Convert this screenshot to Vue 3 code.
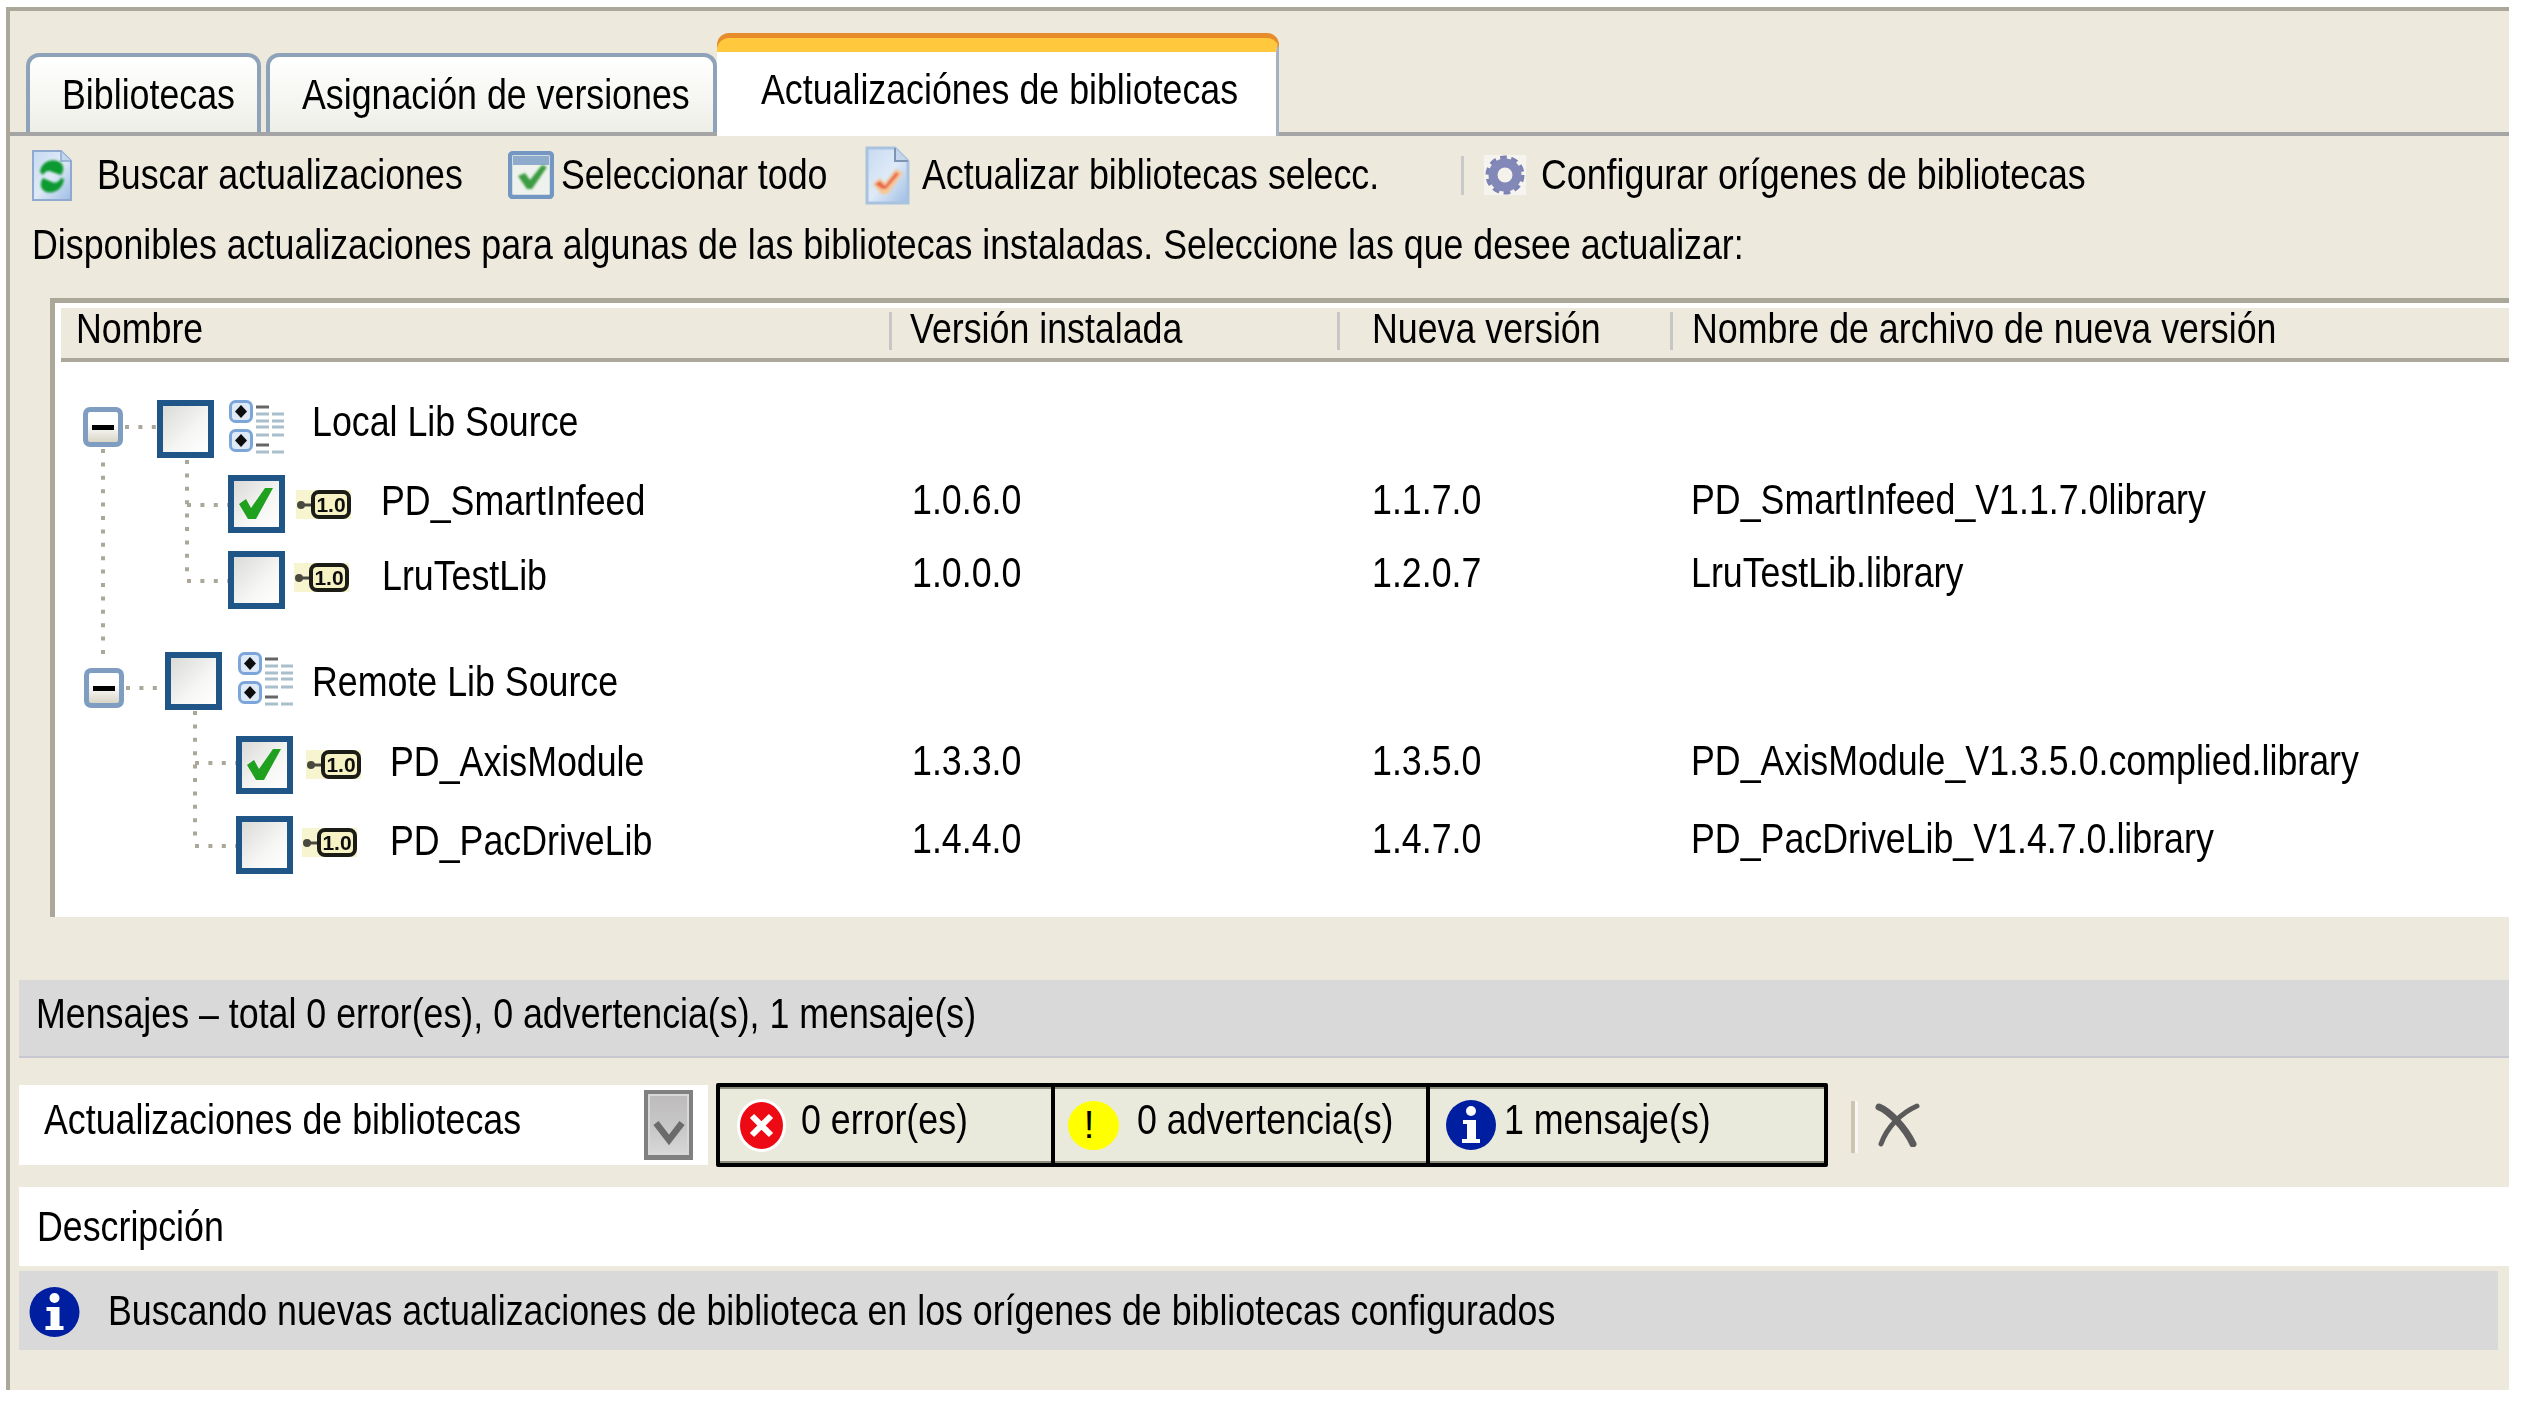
<script setup>
const rows = [
  { name: 'Local Lib Source', group: true, top: 0, exLeft: 28, exTop: 7, cbLeft: 34, checked: false, iconGap: 15, iconTop: 0, textGap: 27, textTop: 0 },
  { name: 'PD_SmartInfeed', top: 17, cbLeft: 173, checked: true, iconGap: 11, iconTop: 15, textGap: 30, textTop: 4, v1: '1.0.6.0', v2: '1.1.7.0', file: 'PD_SmartInfeed_V1.1.7.0library', vTop: 3 },
  { name: 'LruTestLib', top: 18, cbLeft: 173, checked: false, iconGap: 9, iconTop: 12, textGap: 33, textTop: 3, v1: '1.0.0.0', v2: '1.2.0.7', file: 'LruTestLib.library', vTop: 0 },
  { name: 'Remote Lib Source', group: true, top: 43, exLeft: 29, exTop: 16, cbLeft: 41, checked: false, iconGap: 16, iconTop: 0, textGap: 18, textTop: 8 },
  { name: 'PD_AxisModule', top: 26, cbLeft: 181, checked: true, iconGap: 13, iconTop: 14, textGap: 29, textTop: 4, v1: '1.3.3.0', v2: '1.3.5.0', file: 'PD_AxisModule_V1.3.5.0.complied.library', vTop: 3 },
  { name: 'PD_PacDriveLib', top: 22, cbLeft: 181, checked: false, iconGap: 9, iconTop: 12, textGap: 33, textTop: 3, v1: '1.4.4.0', v2: '1.4.7.0', file: 'PD_PacDriveLib_V1.4.7.0.library', vTop: 1 }
]
const connectors = [
  'M48 87V293', 'M70 65H102', 'M132 98V216', 'M132 143H173', 'M132 219H173',
  'M71 326H110', 'M140 349V483', 'M140 401H181', 'M140 484H181'
]
const pos = (px) => `${px}px`
</script>

<template>
  <div class="panel">
    <svg class="defs" width="0" height="0" aria-hidden="true">
      <defs>
        <linearGradient id="paper" x1="0" y1="0" x2="1" y2="1">
          <stop offset="0" stop-color="#c6daf2" />
          <stop offset="0.5" stop-color="#dfeaf7" />
          <stop offset="1" stop-color="#9dbde4" />
        </linearGradient>
        <filter id="soft" x="-10%" y="-10%" width="120%" height="120%">
          <feGaussianBlur stdDeviation="0.9" />
        </filter>
        <filter id="softer" x="-10%" y="-10%" width="120%" height="120%">
          <feGaussianBlur stdDeviation="0.5" />
        </filter>
        <symbol id="lib" viewBox="0 0 55 29">
          <rect width="55" height="29" fill="#f7f5cf" />
          <g filter="url(#softer)">
            <circle cx="5" cy="15" r="4" fill="#4a4a40" />
            <path d="M8 15H18" stroke="#4a4a40" stroke-width="3" />
            <rect x="17" y="2" width="36" height="25" rx="6" fill="#f6f2c4" stroke="#1e1e14" stroke-width="4" />
            <text x="35" y="22" font-size="21" font-weight="700" text-anchor="middle" font-family="Liberation Sans, sans-serif" fill="#0c0c0c">1.0</text>
          </g>
        </symbol>
        <symbol id="tree" viewBox="0 0 56 56">
          <g filter="url(#softer)">
            <rect x="1.5" y="1.5" width="21" height="20" rx="5" fill="#dfeaf6" stroke="#7ba6d9" stroke-width="3" />
            <path d="M12 5L18 11.5L12 18L6 11.5Z" fill="#111" />
            <rect x="1.5" y="30.5" width="21" height="20" rx="5" fill="#dfeaf6" stroke="#7ba6d9" stroke-width="3" />
            <path d="M12 34L18 40.5L12 47L6 40.5Z" fill="#111" />
            <path d="M27 7H40M27 45H40" stroke="#666" stroke-width="3" />
            <path d="M27 14H40M43 14H55M27 21H40M43 21H55M27 27H40M43 27H55M27 35H40M43 35H55M27 52H40M43 52H55" stroke="#a8c0cc" stroke-width="3" />
          </g>
        </symbol>
        <symbol id="info" viewBox="0 0 50 50">
          <ellipse cx="25" cy="25" rx="25" ry="25" fill="#001ea0" />
          <circle cx="25" cy="11" r="5" fill="#fff" />
          <path d="M17 20H30V39H34V43H16V39H21V24H17Z" fill="#fff" />
        </symbol>
      </defs>
    </svg>

    <div class="tabs">
      <div class="tab tab-a"><span class="t">Bibliotecas</span></div>
      <div class="tab tab-b"><span class="t">Asignación de versiones</span></div>
      <div class="tab-active"><span class="t">Actualizaciónes de bibliotecas</span></div>
    </div>

    <div class="toolbar">
      <div class="tool tool-a">
        <svg class="ti-a" width="40" height="51" viewBox="0 0 40 51">
          <g filter="url(#softer)">
            <path d="M1 1H29L39 11V50H1Z" fill="url(#paper)" stroke="#8fa9d0" stroke-width="2" />
            <path d="M29 1V11H39" fill="#c3d6ec" stroke="#8fa9d0" stroke-width="1.5" />
          </g>
          <g filter="url(#soft)">
            <path d="M8 22C9 11 22 7 29 13C32 16 32 21 29 25L20 22C17 20 13 21 11 25Z" fill="#0f9a30" />
            <path d="M32 29C31 41 18 46 11 40C8 37 8 32 11 28L20 32C23 34 27 32 29 28Z" fill="#0f9a30" />
          </g>
        </svg>
        <span class="t">Buscar actualizaciones</span>
      </div>
      <div class="tool tool-b">
        <svg class="ti-b" width="46" height="48" viewBox="0 0 46 48">
          <g filter="url(#softer)">
            <rect x="2" y="2" width="42" height="44" rx="3" fill="#eff2ec" stroke="#7396c2" stroke-width="4.5" />
            <path d="M5 5H41V14H5Z" fill="#8fabcc" />
          </g>
          <path d="M10 25L17 22L22 29L34 14L39 16L24 38H19Z" fill="#3c9c42" filter="url(#soft)" />
        </svg>
        <span class="t">Seleccionar todo</span>
      </div>
      <div class="tool tool-c">
        <svg class="ti-c" width="45" height="59" viewBox="0 0 45 59">
          <g filter="url(#softer)">
            <path d="M2 2H30L43 15V57H2Z" fill="url(#paper)" stroke="#a9c2e0" stroke-width="3" />
            <path d="M30 2V15H43" fill="#c3d6ec" stroke="#7d95b5" stroke-width="2" />
          </g>
          <g filter="url(#soft)">
            <path d="M8 38L15 32L20 37L31 23L38 27L23 48H16Z" fill="#f7c896" />
            <path d="M10 38L15 35L20 40L31 26L34 28L21 43H17Z" fill="#e9634a" />
          </g>
        </svg>
        <span class="t">Actualizar bibliotecas selecc.</span>
      </div>
      <div class="tool-sep"></div>
      <div class="tool tool-d">
        <svg class="ti-d" width="42" height="40" viewBox="0 0 42 40">
          <rect width="42" height="40" fill="#f5f4ee" />
          <g filter="url(#softer)">
            <circle cx="21" cy="20" r="17" fill="none" stroke="#7d83b3" stroke-width="5" stroke-dasharray="6.5 4.2" />
            <circle cx="21" cy="20" r="12" fill="none" stroke="#8288b8" stroke-width="9" />
            <circle cx="21" cy="20" r="7" fill="#f4f2ea" />
          </g>
        </svg>
        <span class="t">Configurar orígenes de bibliotecas</span>
      </div>
    </div>

    <div class="intro"><span class="t">Disponibles actualizaciones para algunas de las bibliotecas instaladas. Seleccione las que desee actualizar:</span></div>

    <div class="table">
      <div class="thead">
        <div class="th th-1"><span class="t">Nombre</span></div>
        <div class="th th-2"><span class="t">Versión instalada</span></div>
        <div class="th th-3"><span class="t">Nueva versión</span></div>
        <div class="th th-4"><span class="t">Nombre de archivo de nueva versión</span></div>
      </div>
      <div class="tbody">
        <svg class="connectors" width="300" height="500" viewBox="0 0 300 500">
          <path v-for="d in connectors" :key="d" :d="d" fill="none" stroke="#aca899" stroke-width="4" stroke-dasharray="4 9.4" />
        </svg>
        <div v-for="r in rows" :key="r.name" class="row" :style="{ marginTop: pos(r.top) }">
          <div class="node">
            <div v-if="r.group" class="expander" :style="{ marginLeft: pos(r.exLeft), marginTop: pos(r.exTop) }"><i></i></div>
            <div class="cb" :style="{ marginLeft: pos(r.cbLeft) }">
              <svg v-if="r.checked" width="45" height="46" viewBox="0 0 45 46">
                <path d="M5 23L12 18L17 27L31 7L39 7L22 38L14 38Z" fill="#1fa01f" />
              </svg>
            </div>
            <svg v-if="r.group" class="ico-tree" :style="{ marginLeft: pos(r.iconGap), marginTop: pos(r.iconTop) }" width="56" height="56"><use href="#tree" /></svg>
            <svg v-else class="ico-lib" :style="{ marginLeft: pos(r.iconGap), marginTop: pos(r.iconTop) }" width="55" height="29"><use href="#lib" /></svg>
            <span class="t node-text" :style="{ marginLeft: pos(r.textGap), marginTop: pos(r.textTop) }">{{ r.name }}</span>
          </div>
          <template v-if="!r.group">
            <div class="cell" :style="{ marginTop: pos(r.vTop) }"><span class="t">{{ r.v1 }}</span></div>
            <div class="cell" :style="{ marginTop: pos(r.vTop) }"><span class="t">{{ r.v2 }}</span></div>
            <div class="cell" :style="{ marginTop: pos(r.vTop) }"><span class="t">{{ r.file }}</span></div>
          </template>
        </div>
      </div>
    </div>

    <div class="msg-head"><span class="t">Mensajes – total 0 error(es), 0 advertencia(s), 1 mensaje(s)</span></div>

    <div class="filters">
      <div class="combo">
        <span class="t">Actualizaciones de bibliotecas</span>
        <div class="combo-btn">
          <svg width="34" height="26" viewBox="0 0 34 26">
            <path d="M4 3L17 20L30 3" fill="none" stroke="#6b6b6b" stroke-width="6.5" />
          </svg>
        </div>
      </div>
      <div class="counts">
        <div class="count c-err">
          <svg class="ci-err" width="49" height="53" viewBox="0 0 49 53">
            <ellipse cx="24.5" cy="26.5" rx="24.5" ry="26.5" fill="#fff" />
            <ellipse cx="24.5" cy="26.5" rx="21.5" ry="23.5" fill="#ee0a14" />
            <path d="M15 17L34 36M34 17L15 36" stroke="#fff" stroke-width="6" />
          </svg>
          <span class="t">0 error(es)</span>
        </div>
        <div class="count c-warn">
          <svg class="ci-warn" width="51" height="49" viewBox="0 0 51 49">
            <ellipse cx="25.5" cy="24.5" rx="25.5" ry="24.5" fill="#ffff00" />
            <text x="21" y="37" font-size="38" text-anchor="middle" font-family="Liberation Sans, sans-serif" fill="#000">!</text>
          </svg>
          <span class="t">0 advertencia(s)</span>
        </div>
        <div class="count c-info">
          <svg class="ci-info" width="50" height="50"><use href="#info" /></svg>
          <span class="t">1 mensaje(s)</span>
        </div>
      </div>
      <div class="filter-sep"></div>
      <svg class="clear" width="45" height="44" viewBox="0 0 45 44">
        <path d="M4 4C14 8 30 24 38 41" fill="none" stroke="#5a5a5a" stroke-width="7" stroke-linecap="round" />
        <path d="M42 3C26 10 12 24 6 41" fill="none" stroke="#5a5a5a" stroke-width="5" stroke-linecap="round" />
      </svg>
    </div>

    <div class="desc"><span class="t">Descripción</span></div>
    <div class="message">
      <svg class="mi" width="51" height="50"><use href="#info" /></svg>
      <span class="t">Buscando nuevas actualizaciones de biblioteca en los orígenes de bibliotecas configurados</span>
    </div>
  </div>
</template>

<style>
html, body { background: #ffffff; }
</style>

<style scoped>
.panel {
  box-sizing: border-box;
  width: 2503px;
  margin: 7px 0 0 6px;
  padding-bottom: 40px;
  border-top: 4px solid #aca899;
  border-left: 4px solid #aca899;
  background: #ede9dd;
  color: #000;
  font-family: "Liberation Sans", Arial, sans-serif;
  font-size: 42px;
  line-height: 44px;
  position: relative;
}
.defs { position: absolute; }
.t {
  display: inline-block;
  flex: none;
  white-space: nowrap;
  transform: scaleX(0.8515);
  transform-origin: 0 50%;
}

/* tabs */
.tabs {
  box-sizing: border-box;
  height: 125px;
  padding-left: 16px;
  display: flex;
  align-items: flex-end;
  border-bottom: 4px solid #a5a5a5;
}
.tab {
  box-sizing: border-box;
  height: 79px;
  padding-top: 16px;
  border: 4px solid #8ea3b9;
  border-bottom: 0;
  border-radius: 13px 13px 0 0;
  background: linear-gradient(#ffffff 0%, #fbfbf9 25%, #eeeee8 100%);
  overflow: hidden;
}
.tab-a { width: 235px; padding-left: 32px; margin-right: 5px; }
.tab-b { width: 451px; padding-left: 32px; }
.tab-active {
  box-sizing: border-box;
  width: 562px;
  height: 98px;
  margin-top: 5px;
  margin-bottom: -4px;
  padding: 16px 0 0 44px;
  border-top: 14px solid #ffc83d;
  border-right: 3px solid #a7b2c0;
  border-radius: 12px 12px 0 0;
  background: #ffffff;
  box-shadow: 0 -5px 0 #e78b2b;
  position: relative;
}

/* toolbar */
.toolbar {
  height: 78px;
  padding-left: 22px;
  display: flex;
  align-items: center;
}
.tool { display: flex; align-items: center; flex: none; }
.tool-a { width: 476px; }
.tool-a .t { margin-left: 25px; }
.tool-b { width: 357px; }
.tool-b .t { margin-left: 7px; }
.tool-c { width: 596px; }
.tool-c .t { margin-left: 12px; }
.tool-sep {
  flex: none;
  width: 3px;
  height: 39px;
  margin-right: 20px;
  background: #c9c9c9;
}
.tool-d .t { margin-left: 15px; }
.ti-a, .ti-b, .ti-c, .ti-d { flex: none; }
.intro { height: 62px; line-height: 62px; padding-left: 22px; }

/* table */
.table {
  box-sizing: border-box;
  margin: 22px 0 0 40px;
  height: 619px;
  border-top: 5px solid #aca899;
  border-left: 5px solid #aca899;
  background: #ffffff;
}
.thead {
  box-sizing: border-box;
  height: 54px;
  margin: 5px 0 0 6px;
  padding: 4px 0 8px;
  display: grid;
  grid-template-columns: 828px 448px 333px 1fr;
  background: #ede9dd;
  border-bottom: 4px solid #aca899;
}
.th {
  height: 38px;
  line-height: 34px;
  border-left: 3px solid #c6c6c6;
  white-space: nowrap;
}
.th-1 { border-left: 0; padding-left: 15px; }
.th-2 { padding-left: 18px; }
.th-3 { padding-left: 32px; }
.th-4 { padding-left: 19px; }
.tbody { position: relative; padding-top: 38px; }
.connectors { position: absolute; left: 0; top: 0; }
.row {
  position: relative;
  height: 58px;
  display: grid;
  grid-template-columns: 857px 460px 319px 1fr;
}
.node { display: flex; align-items: flex-start; }
.expander {
  box-sizing: border-box;
  flex: none;
  width: 40px;
  height: 40px;
  border: 5px solid #7f9dc0;
  border-radius: 7px;
  background: linear-gradient(#ffffff 40%, #d9d5c6 100%);
  display: flex;
  align-items: center;
  justify-content: center;
}
.expander i { width: 22px; height: 5px; background: #000; }
.cb {
  box-sizing: border-box;
  flex: none;
  width: 57px;
  height: 58px;
  border: 6px solid #1f5587;
  background: linear-gradient(135deg, #dadad7 0%, #f6f6f5 60%, #ffffff 100%);
}
.cb svg { display: block; }
.ico-tree, .ico-lib { flex: none; }
.cell { white-space: nowrap; }

/* messages */
.msg-head {
  box-sizing: border-box;
  height: 78px;
  margin: 63px 0 0 9px;
  padding: 12px 0 0 17px;
  background: #d9d9d9;
  border-bottom: 2px solid #c8c8d2;
}
.filters {
  height: 84px;
  margin: 25px 0 0 9px;
  display: flex;
  align-items: center;
}
.combo {
  box-sizing: border-box;
  flex: none;
  width: 689px;
  height: 80px;
  padding: 0 15px 0 25px;
  background: #ffffff;
  display: flex;
  align-items: center;
  justify-content: space-between;
}
.combo .t { margin-bottom: 10px; }
.combo-btn {
  box-sizing: border-box;
  flex: none;
  width: 49px;
  height: 70px;
  padding-top: 26px;
  border: 4px solid #808080;
  border-bottom-width: 5px;
  background: linear-gradient(#bdbabc 0%, #c9c9c9 60%, #d8d8d8 100%);
  box-shadow: inset 0 0 0 2px #d8d8d8;
  display: flex;
  justify-content: center;
}
.counts {
  box-sizing: border-box;
  flex: none;
  width: 1112px;
  height: 84px;
  margin-left: 8px;
  border: 4px solid #000;
  border-radius: 2px;
  background: #e9e9dc;
  box-shadow: inset 0 2px 0 #8c8c7c, inset 0 -2px 0 #8c8c7c;
  display: flex;
}
.count { box-sizing: border-box; flex: none; height: 76px; display: flex; align-items: center; }
.count .t { margin-bottom: 10px; }
.c-err { width: 331px; padding-left: 17px; }
.c-err .t { margin-left: 15px; }
.c-warn { width: 375px; padding-left: 13px; border-left: 4px solid #000; }
.c-warn .t { margin-left: 18px; }
.c-info { width: 398px; padding-left: 16px; border-left: 4px solid #000; }
.c-info .t { margin-left: 8px; }
.count svg { flex: none; }
.filter-sep {
  flex: none;
  width: 4px;
  height: 52px;
  margin: 4px 20px 0 23px;
  background: #cbc6b2;
  border-right: 3px solid #f7f6f1;
}
.clear { flex: none; margin-left: -3px; }
.desc {
  height: 79px;
  line-height: 79px;
  margin: 20px 0 0 9px;
  padding-left: 18px;
  background: #ffffff;
}
.message {
  box-sizing: border-box;
  height: 79px;
  margin: 5px 11px 0 9px;
  padding-left: 10px;
  background: #d9d9d9;
  display: flex;
  align-items: center;
}
.mi { flex: none; margin-top: 2px; }
.message .t { margin-left: 28px; }
</style>
